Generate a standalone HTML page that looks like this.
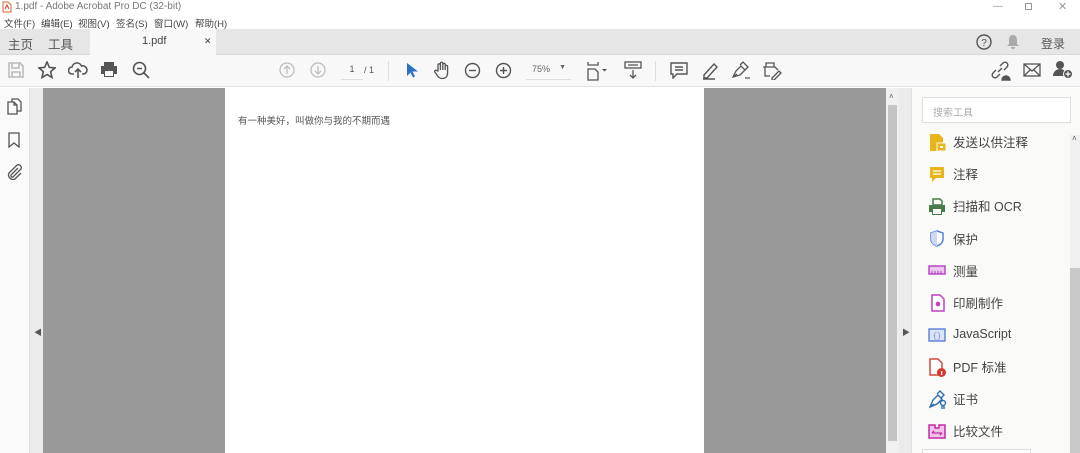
<!DOCTYPE html>
<html><head><meta charset="utf-8"><style>
*{margin:0;padding:0;box-sizing:border-box}
body{width:1080px;height:453px;overflow:hidden;background:#fff;font-family:"Liberation Sans","Noto Sans CJK SC",sans-serif;position:relative;color:#444}
.a{position:absolute}
.ic{position:absolute;stroke:#555;fill:none;stroke-width:1.6}
.ti{font-size:12.5px;color:#444}
.m{position:absolute;top:16px;font-size:9.5px;color:#444;white-space:nowrap}
</style></head><body>
<div class="a" style="left:0;top:0;width:1080px;height:14px;background:#fff"></div>
<svg class="a" style="left:2px;top:1px" width="10" height="12"><path d="M1 1h5l3 3v7H1z" fill="#fff" stroke="#d46a2a"/><path d="M3 8l2-4 2 4" stroke="#d33" fill="none"/></svg>
<div class="a" style="left:15px;top:1px;font-size:10px;color:#777">1.pdf - Adobe Acrobat Pro DC (32-bit)</div>
<div class="a" style="left:993px;top:1px;font-size:10px;color:#999">—</div>
<div class="a" style="left:1025px;top:3px;width:7px;height:7px;border:1px solid #999"></div>
<div class="a" style="left:1058px;top:0px;font-size:11px;color:#999">✕</div>
<div class="m" style="left:4px">文件(F)</div>
<div class="m" style="left:41px">编辑(E)</div>
<div class="m" style="left:78px">视图(V)</div>
<div class="m" style="left:116px">签名(S)</div>
<div class="m" style="left:154px">窗口(W)</div>
<div class="m" style="left:195px">帮助(H)</div>
<div class="a" style="left:0;top:29px;width:1080px;height:26px;background:#e6e6e6;border-bottom:1px solid #d8d8d8"></div>
<div class="a" style="left:90px;top:29px;width:126px;height:26px;background:#f8f8f8"></div>
<div class="a" style="left:8px;top:34px;font-size:12.5px;color:#555">主页</div>
<div class="a" style="left:48px;top:34px;font-size:12.5px;color:#555">工具</div>
<div class="a" style="left:142px;top:35px;font-size:11px;color:#444">1.pdf</div>
<div class="a" style="left:204px;top:36px;font-size:9px;color:#444">✕</div>
<svg class="a" style="left:976px;top:34px" width="16" height="16"><circle cx="8" cy="8" r="7" fill="none" stroke="#555" stroke-width="1.4"/><text x="8" y="12" font-size="10" text-anchor="middle" fill="#555" font-family="Liberation Sans">?</text></svg>
<svg class="a" style="left:1006px;top:34px" width="14" height="16"><path d="M7 1c-3 0-4 3-4 5v4l-2 2h12l-2-2V6c0-2-1-5-4-5zM5 13a2 2 0 004 0z" fill="#aaa"/></svg>
<div class="a" style="left:1041px;top:35px;font-size:12px;color:#555">登录</div>
<div class="a" style="left:0;top:55px;width:1080px;height:32px;background:#f8f8f8;border-bottom:1px solid #e2e2e2"></div>
<svg class="ic" style="left:8px;top:62px;stroke:#bbb" width="16" height="16"><path d="M1 1h11l3 3v11H1zM4 1v5h7V1M4 15v-5h8v5"/></svg>
<svg class="ic" style="left:38px;top:61px" width="18" height="18"><path d="M9 1l2.4 5.4 5.6.5-4.3 3.8 1.3 5.8L9 13.6 4 16.5l1.3-5.8L1 6.9l5.6-.5z"/></svg>
<svg class="ic" style="left:68px;top:61px" width="20" height="18"><path d="M6 13H4a3.5 3.5 0 010-7 5 5 0 019.5-1A4 4 0 0116 13h-2M10 17V8M7 11l3-3 3 3"/></svg>
<svg class="a" style="left:100px;top:61px" width="18" height="17"><path d="M4 1h10v4H4zM1 5h16v8h-3v3H4v-3H1z" fill="#555"/><rect x="5" y="10" width="8" height="5" fill="#f8f8f8"/></svg>
<svg class="ic" style="left:132px;top:61px" width="18" height="18"><circle cx="7.5" cy="7.5" r="6"/><path d="M12 12l5 5M5 7.5h5"/></svg>
<svg class="ic" style="left:279px;top:62px;stroke:#bbb;stroke-width:1.2" width="16" height="16"><circle cx="8" cy="8" r="7"/><path d="M8 12V4M5 7l3-3 3 3"/></svg>
<svg class="ic" style="left:310px;top:62px;stroke:#bbb;stroke-width:1.2" width="16" height="16"><circle cx="8" cy="8" r="7"/><path d="M8 4v8M5 9l3 3 3-3"/></svg>
<div class="a" style="left:341px;top:64px;width:22px;height:16px;border-bottom:1px solid #ddd;font-size:9px;text-align:center;color:#555">1</div>
<div class="a" style="left:364px;top:65px;font-size:9px;color:#555">/ 1</div>
<div class="a" style="left:388px;top:61px;width:1px;height:20px;background:#ddd"></div>
<svg class="a" style="left:406px;top:62px" width="12" height="17"><path d="M1 1v13l3.5-3.5 2.5 5 2-1-2.5-5H12z" fill="#2d6fc7"/></svg>
<svg class="ic" style="left:433px;top:61px;stroke-width:1.3" width="18" height="19"><path d="M5 10V4a1.2 1.2 0 012.4 0v5V2.5a1.2 1.2 0 012.4 0V9V3.5a1.2 1.2 0 012.4 0V9V5.5a1.2 1.2 0 012.4 0v6c0 4-2 6-5 6-3 0-4-1-6-4l-2-3a1.2 1.2 0 012-1z"/></svg>
<svg class="ic" style="left:464px;top:62px;stroke-width:1.4" width="17" height="17"><circle cx="8.5" cy="8.5" r="7"/><path d="M5 8.5h7"/></svg>
<svg class="ic" style="left:495px;top:62px;stroke-width:1.4" width="17" height="17"><circle cx="8.5" cy="8.5" r="7"/><path d="M5 8.5h7M8.5 5v7"/></svg>
<div class="a" style="left:526px;top:64px;width:45px;height:16px;border-bottom:1px solid #ddd;font-size:9px;color:#666;padding-left:6px">75%<span style="position:absolute;right:5px;font-size:7px">▼</span></div>
<svg class="ic" style="left:586px;top:61px;stroke-width:1.3" width="22" height="20"><path d="M2 1v3h10V1M2 19V8h7l3 3v8z"/><path d="M16 8h5l-2.5 2.5z" fill="#555" stroke="none"/></svg>
<svg class="ic" style="left:624px;top:61px;stroke-width:1.3" width="18" height="18"><rect x="1" y="1" width="16" height="6"/><path d="M4 4h10M9 9v8M6 14l3 3 3-3"/></svg>
<div class="a" style="left:655px;top:61px;width:1px;height:20px;background:#ddd"></div>
<svg class="ic" style="left:670px;top:62px;stroke-width:1.4" width="18" height="17"><path d="M1 1h16v11H7l-4 4v-4H1zM5 5h8M5 8h8"/></svg>
<svg class="ic" style="left:701px;top:61px;stroke-width:1.4" width="18" height="19"><path d="M3 14l10-11 3 3-10 11H3zM2 18h12" /></svg>
<svg class="ic" style="left:731px;top:61px;stroke-width:1.3" width="20" height="19"><path d="M2 16l3-6 5-5 4 4-5 5zM9 4l3-3 5 5-3 3M2 16l4-3M14 17h5"/></svg>
<svg class="ic" style="left:762px;top:61px;stroke-width:1.3" width="20" height="19"><path d="M4 6V2h8v4M1 6h12l3 3M3 6v9h5M10 17l7-7 2 2-7 7h-2z"/></svg>
<svg class="ic" style="left:990px;top:61px;stroke-width:1.4" width="22" height="20"><path d="M8 11l4-4M6 9l-3 3a2.8 2.8 0 004 4l3-3M14 9l3-3a2.8 2.8 0 00-4-4l-3 3"/><path d="M12 19a4 4 0 018 0z" fill="#555"/></svg>
<svg class="ic" style="left:1023px;top:63px;stroke-width:1.3" width="18" height="14"><rect x="1" y="1" width="16" height="12"/><path d="M1 1l8 7 8-7M1 13l6-6M17 13l-6-6"/></svg>
<svg class="a" style="left:1053px;top:60px" width="20" height="20"><circle cx="7" cy="5" r="4" fill="#555"/><path d="M0 16a7 7 0 0114 0z" fill="#555"/><circle cx="15" cy="14" r="4.5" fill="#555" stroke="#f8f8f8"/><path d="M15 11.5v5M12.5 14h5" stroke="#fff" stroke-width="1.3"/></svg>
<div class="a" style="left:0;top:88px;width:30px;height:365px;background:#fafafa;border-right:1px solid #e2e2e2"></div>
<div class="a" style="left:30px;top:88px;width:13px;height:365px;background:#ebebeb"></div>
<div class="a" style="left:34px;top:327px;font-size:8px;color:#555">◀</div>
<svg class="ic" style="left:7px;top:98px;stroke-width:1.3" width="15" height="18"><path d="M1 4h6l3 3v9H1zM5 4V1h6l3 3v9h-4M7 4v3h3"/></svg>
<svg class="ic" style="left:8px;top:132px;stroke-width:1.3" width="12" height="16"><path d="M1 1h10v14l-5-4-5 4z"/></svg>
<svg class="ic" style="left:6px;top:163px;stroke-width:1.3" width="16" height="17"><path d="M12 5l-7 7a1.5 1.5 0 002 2l8-8a3 3 0 00-4-4L3 10a4.5 4.5 0 006 6l6-6"/></svg>
<div class="a" style="left:43px;top:88px;width:843px;height:365px;background:#999"></div>
<div class="a" style="left:225px;top:88px;width:479px;height:365px;background:#fff"></div>
<div class="a" style="left:238px;top:113px;font-size:9.5px;color:#555">有一种美好，叫做你与我的不期而遇</div>
<div class="a" style="left:886px;top:88px;width:13px;height:365px;background:#f0f0f0"></div>
<div class="a" style="left:888px;top:105px;width:9px;height:336px;background:#c4c4c4"></div>
<div class="a" style="left:889px;top:92px;font-size:8px;color:#555">˄</div>
<div class="a" style="left:899px;top:88px;width:13px;height:365px;background:#ebebeb;border-right:1px solid #e0e0e0"></div>
<div class="a" style="left:902px;top:327px;font-size:8px;color:#555">▶</div>
<div class="a" style="left:912px;top:88px;width:168px;height:365px;background:#fafaf8"></div>
<div class="a" style="left:922px;top:97px;width:149px;height:26px;border:1px solid #ddd;background:#fff;font-size:10px;color:#aaa;padding:6px 0 0 10px">搜索工具</div>
<div class="a" style="left:1070px;top:135px;width:10px;height:318px;background:#f0f0f0"></div>
<div class="a" style="left:1070px;top:268px;width:10px;height:185px;background:#c8c8c8"></div>
<div class="a" style="left:1072px;top:134px;font-size:8px;color:#555">˄</div>
<div class="a" style="left:922px;top:449px;width:109px;height:4px;border:1px solid #ddd;border-bottom:none;background:#fff"></div>

<svg class="a" style="left:929px;top:133px" width="18" height="20"><path d="M1 1h9l4 4v13H1z" fill="#e8b51a"/><rect x="8" y="10" width="9" height="8" fill="#e8b51a" stroke="#fafaf8"/><rect x="11" y="13" width="3" height="2" fill="#fff"/></svg>
<div class="a ti" style="left:953px;top:132px">发送以供注释</div>
<svg class="a" style="left:929px;top:166px" width="16" height="18"><path d="M1 1h14v11H7l-4 4v-4H1z" fill="#e8b51a"/><path d="M4 5h8M4 8h8" stroke="#fff" stroke-width="1.3"/></svg>
<div class="a ti" style="left:953px;top:164px">注释</div>
<svg class="a" style="left:928px;top:198px" width="18" height="18"><path d="M5 1h7l2 2v4H5z" fill="none" stroke="#4a7b4a" stroke-width="1.5"/><path d="M1 7h16v7h-3v3H4v-3H1z" fill="#4a7b4a"/><rect x="5" y="11" width="8" height="5" fill="#fafaf8"/></svg>
<div class="a ti" style="left:953px;top:196px">扫描和 OCR</div>
<svg class="a" style="left:930px;top:230px" width="14" height="17"><path d="M7 1l6 2v6c0 4-3 6-6 7-3-1-6-3-6-7V3z" fill="#fff" stroke="#5b7fd6" stroke-width="1.5"/><path d="M7 1v15c-3-1-6-3-6-7V3z" fill="#cdd8f3"/></svg>
<div class="a ti" style="left:953px;top:229px">保护</div>
<svg class="a" style="left:928px;top:265px" width="18" height="10"><rect x="1" y="1" width="16" height="8" fill="#e9c7ee" stroke="#b43cc0" stroke-width="1.4"/><path d="M4 9V6M7 9V6M10 9V6M13 9V6" stroke="#b43cc0"/></svg>
<div class="a ti" style="left:953px;top:261px">测量</div>
<svg class="a" style="left:931px;top:294px" width="14" height="18"><path d="M1 1h8l4 4v12H1z" fill="#fff" stroke="#c23fbf" stroke-width="1.5"/><circle cx="7" cy="10" r="2.3" fill="#c23fbf"/></svg>
<div class="a ti" style="left:953px;top:293px">印刷制作</div>
<svg class="a" style="left:928px;top:328px" width="18" height="14"><rect x="1" y="1" width="16" height="12" fill="#dbe3f7" stroke="#5b7fd6" stroke-width="1.4"/><text x="9" y="10" font-size="7" text-anchor="middle" fill="#5b7fd6" font-family="Liberation Mono">{}</text></svg>
<div class="a ti" style="left:953px;top:327px">JavaScript</div>
<svg class="a" style="left:929px;top:358px" width="18" height="20"><path d="M1 1h8l4 4v12H1z" fill="#fff" stroke="#d04a3a" stroke-width="1.5"/><circle cx="12.5" cy="14.5" r="4.5" fill="#d63a2f"/><rect x="12" y="13" width="1.2" height="4" fill="#fff"/></svg>
<div class="a ti" style="left:953px;top:357px">PDF 标准</div>
<svg class="a" style="left:928px;top:390px" width="20" height="20" fill="none" stroke="#2f6fb0" stroke-width="1.4"><path d="M2 17l3-7 5-5 4 4-5 5zM9 4l3-3 4 4-3 3M2 17l4-3"/><circle cx="15" cy="13" r="2.5"/><path d="M14 16v3M16 16v3"/></svg>
<div class="a ti" style="left:953px;top:389px">证书</div>
<svg class="a" style="left:928px;top:423px" width="18" height="17"><path d="M1 2h6v3h4V2h6v13H1z" fill="#f2c3e8" stroke="#c42aa8" stroke-width="1.5"/><path d="M4 10h10M4 10l2-2M14 10l-2 2" stroke="#c42aa8" stroke-width="1.3"/></svg>
<div class="a ti" style="left:953px;top:421px">比较文件</div>
</body></html>
